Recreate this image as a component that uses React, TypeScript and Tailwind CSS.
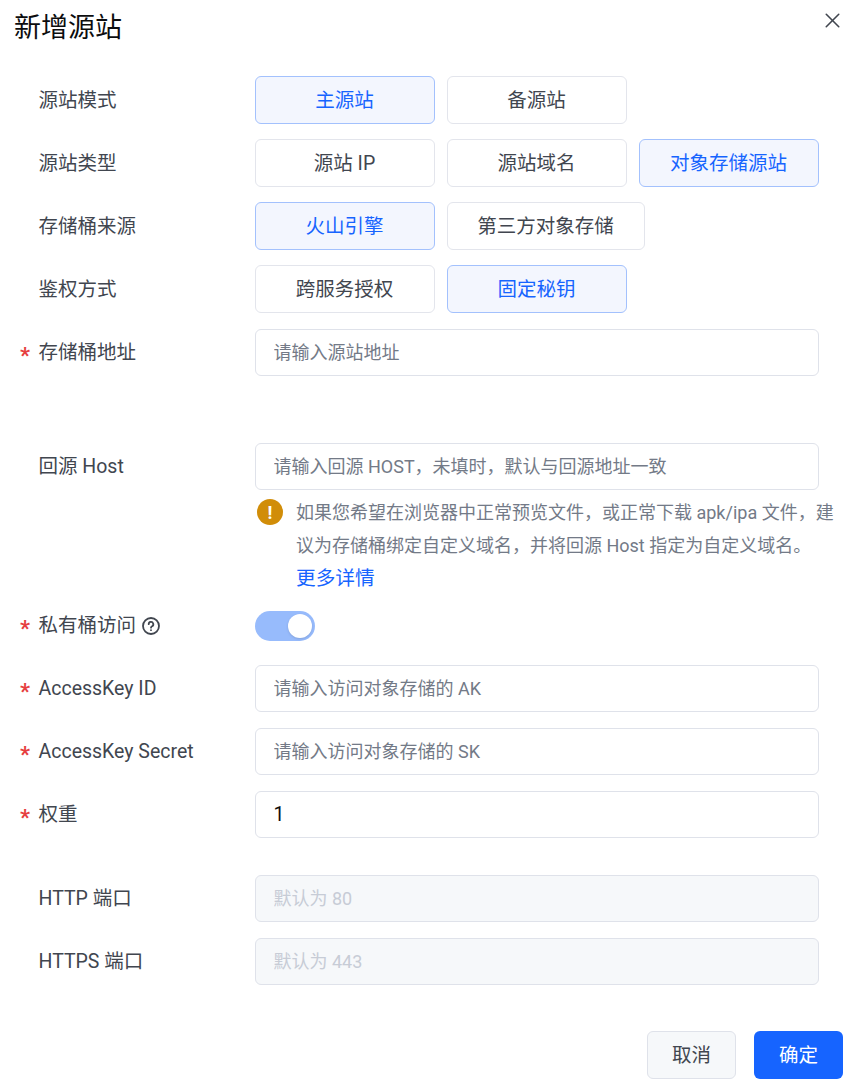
import { X } from 'lucide-react';

const font = "font-['Roboto','Noto_Sans_CJK_SC',sans-serif]";

function Choice({ label, active, wide }: { label: string; active?: boolean; wide?: boolean }) {
  return (
    <button
      type="button"
      className={`h-12 rounded-[6px] border pr-[1px] pt-[2px] text-[19.5px] ${wide ? 'w-[198px]' : 'w-[180px]'} ${
        active
          ? 'border-[#a3c1fd] bg-[#f3f6fe] text-[#1664ff]'
          : 'border-[#e3e5ec] bg-white text-[#41464f]'
      }`}
    >
      {label}
    </button>
  );
}

function Row({ label, required, children, className = '', choice }: { label: React.ReactNode; required?: boolean; children: React.ReactNode; className?: string; choice?: boolean }) {
  return (
    <div className={`flex ${className}`}>
      <div className={`relative flex h-12 w-[235px] shrink-0 items-center pl-[18.5px] text-[19.5px] text-[#41464f] ${choice ? 'pt-[2px]' : ''}`}>
        {required && <span className="absolute left-0 top-[10px] text-[22px] font-bold text-[#e63f3f]">*</span>}
        {label}
      </div>
      <div className="min-w-0 flex-1">{children}</div>
    </div>
  );
}

function Field({ placeholder, value, disabled }: { placeholder?: string; value?: string; disabled?: boolean }) {
  return (
    <input
      readOnly
      disabled={disabled}
      placeholder={placeholder}
      value={value ?? ''}
      className={`block h-[47px] w-full rounded-[6px] border border-[#dfe2ea] px-[17.5px] text-[18px] outline-none placeholder:opacity-100 ${
        disabled
          ? 'bg-[#f6f8fa] placeholder:text-[#c7ccd6]'
          : 'bg-white text-[#0c0d0e] placeholder:text-[#737a87]'
      } ${value ? 'text-[19.5px]' : ''}`}
    />
  );
}

export default function App() {
  return (
    <div className={`${font} h-[1089px] w-[849px] overflow-hidden bg-white`}>
      {/* Header */}
      <div className="flex h-[76px] items-start justify-between pl-[14px] pr-[4px]">
        <h1 className="mt-[8px] text-[27px] leading-[40px] text-[#0c0d0e]">新增源站</h1>
        <X className="mt-[8px] h-[25px] w-[25px] text-[#41464f]" strokeWidth={1.5} />
      </div>

      {/* Form */}
      <div className="pl-[20px] pr-[30px]">
        <Row label="源站模式" choice className="mb-[15px]">
          <div className="flex gap-3">
            <Choice label="主源站" active />
            <Choice label="备源站" />
          </div>
        </Row>
        <Row label="源站类型" choice className="mb-[15px]">
          <div className="flex gap-3">
            <Choice label="源站 IP" />
            <Choice label="源站域名" />
            <Choice label="对象存储源站" active />
          </div>
        </Row>
        <Row label="存储桶来源" choice className="mb-[15px]">
          <div className="flex gap-3">
            <Choice label="火山引擎" active />
            <Choice label="第三方对象存储" wide />
          </div>
        </Row>
        <Row label="鉴权方式" choice className="mb-4">
          <div className="flex gap-3">
            <Choice label="跨服务授权" />
            <Choice label="固定秘钥" active />
          </div>
        </Row>
        <Row label="存储桶地址" required className="mb-[66px]">
          <Field placeholder="请输入源站地址" />
        </Row>
        <Row label="回源 Host" className="mb-[7px]">
          <Field placeholder="请输入回源 HOST，未填时，默认与回源地址一致" />
          <div className="mt-[6px] ml-[2px] flex w-[580px] text-[18px] leading-[33px] text-[#737a87]">
            <span className="mr-[13px] mt-[3px] flex h-[26px] w-[26px] shrink-0 items-center justify-center rounded-full bg-[#d18d08] text-[18px] font-bold text-white">
              !
            </span>
            <div>
              <p className="whitespace-nowrap">如果您希望在浏览器中正常预览文件，或正常下载 apk/ipa 文件，建</p>
              <p className="whitespace-nowrap">议为存储桶绑定自定义域名，并将回源 Host 指定为自定义域名。</p>
              <a className="text-[19.7px] text-[#1664ff]">更多详情</a>
            </div>
          </div>
        </Row>
        <Row
          required
          className="mb-[15px]"
          label={
            <span className="flex items-center gap-[6px]">
              私有桶访问
              <svg viewBox="0 0 18 18" className="h-[18px] w-[18px]" fill="none" stroke="#41464f" strokeWidth="1.8" strokeLinecap="round">
                <circle cx="9" cy="9" r="8" />
                <path d="M6.7 7.2a2.3 2.3 0 1 1 3.4 2c-.7.4-1.1.8-1.1 1.5" />
                <path d="M9 13.1v.1" />
              </svg>
            </span>
          }
        >
          <div className="flex h-[48px] items-center">
            <div className="flex h-[30px] w-[60px] items-center justify-end rounded-full bg-[#97bbfc] pr-[3px]">
              <span className="h-[24px] w-[24px] rounded-full bg-white shadow-sm" />
            </div>
          </div>
        </Row>
        <Row label="AccessKey ID" required className="mb-[15px]">
          <Field placeholder="请输入访问对象存储的 AK" />
        </Row>
        <Row label="AccessKey Secret" required className="mb-[15px]">
          <Field placeholder="请输入访问对象存储的 SK" />
        </Row>
        <Row label="权重" required className="mb-[36px]">
          <Field value="1" />
        </Row>
        <Row label="HTTP 端口" className="mb-[15px]">
          <Field placeholder="默认为 80" disabled />
        </Row>
        <Row label="HTTPS 端口">
          <Field placeholder="默认为 443" disabled />
        </Row>
      </div>

      {/* Footer */}
      <div className="mt-[45px] flex justify-end gap-[18px] pr-[6px]">
        <button type="button" className="h-12 w-[89px] rounded-[6px] border border-[#dfe2ea] bg-[#f6f8fa] pt-[2px] text-[19.5px] text-[#41464f]">
          取消
        </button>
        <button type="button" className="h-12 w-[89px] rounded-[6px] bg-[#1664ff] pt-[2px] text-[19.5px] text-white">
          确定
        </button>
      </div>
    </div>
  );
}
